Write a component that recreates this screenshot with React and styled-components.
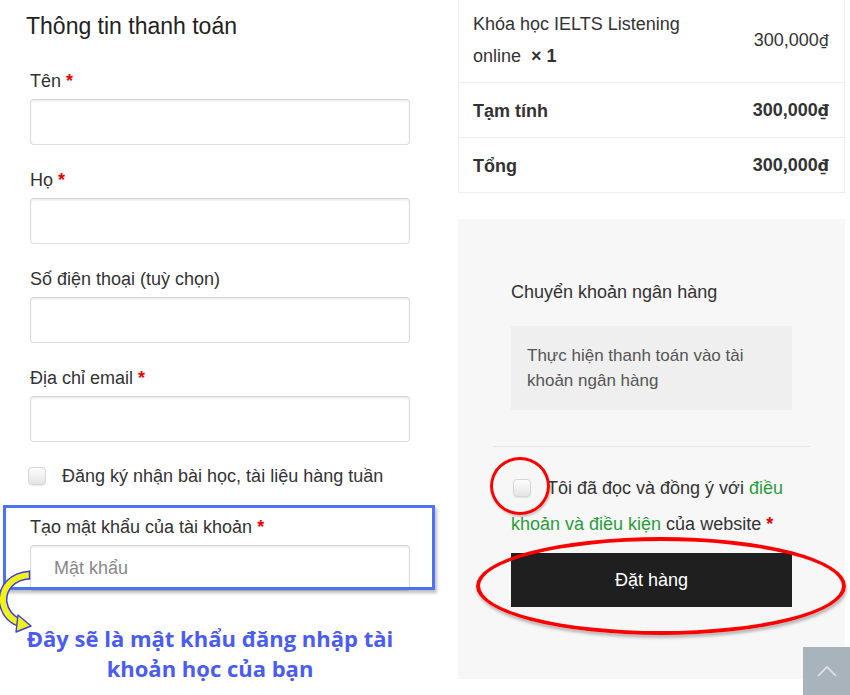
import React from "react";
import styled, { createGlobalStyle } from "styled-components";

const GlobalStyle = createGlobalStyle`
  html, body {
    margin: 0;
    padding: 0;
    background: #fff;
    font-family: "Liberation Sans", Arial, sans-serif;
    color: #333;
  }
  * { box-sizing: border-box; }
`;

const Page = styled.div`
  display: grid;
  grid-template-columns: 440px 387px;
  column-gap: 18px;
  width: 850px;
  height: 695px;
  overflow: hidden;
`;

const Billing = styled.div`
  padding: 0 30px 0 30px;
`;

const Title = styled.h3`
  margin: 13px 0 30px -4px;
  font-size: 23px;
  line-height: 26px;
  font-weight: normal;
  color: #222;
`;

const Field = styled.div`
  position: relative;
  margin-bottom: ${(p) => (p.$last ? "0" : "23px")};
`;

const Label = styled.label`
  display: block;
  font-size: 18px;
  line-height: 24px;
  margin-bottom: 6px;
  color: #333;
`;

const Req = styled.span`
  color: #e00;
  font-weight: bold;
`;

const Input = styled.input`
  display: block;
  width: 100%;
  height: 46px;
  border: 1px solid #ddd;
  border-top-color: #d2d2d2;
  border-radius: 4px;
  box-shadow: inset 0 2px 2px rgba(0, 0, 0, 0.06);
  padding: 0 23px;
  font-family: inherit;
  font-size: 18px;
  color: #333;
  background: #fff;
  outline: none;
  &::placeholder {
    color: #888;
  }
`;

const Box = styled.span`
  display: inline-block;
  flex: none;
  width: 18px;
  height: 18px;
  border: 1px solid #d6d6d6;
  border-radius: 4px;
  background: linear-gradient(#fdfdfd, #e4e4e4);
  box-shadow: 0 1px 1px rgba(0, 0, 0, 0.08);
`;

const CheckRow = styled.div`
  display: flex;
  align-items: center;
  gap: 16px;
  margin: 22px 0 27px -2px;
  font-size: 18px;
  line-height: 24px;
`;

const BlueFrame = styled.div`
  position: absolute;
  top: -10px;
  left: -27px;
  right: -25px;
  bottom: 1px;
  border: 3px solid #4d72f5;
  box-shadow: 2px 3px 3px rgba(0, 0, 0, 0.25);
  pointer-events: none;
`;

const Arrow = styled.svg`
  position: absolute;
  left: -30px;
  top: 45px;
  overflow: visible;
`;

const Note = styled.p`
  margin: 32px 0 0 -10px;
  width: 380px;
  text-align: center;
  font-family: "Open Sans", "Lato", sans-serif;
  font-weight: bold;
  font-size: 22px;
  line-height: 30px;
  color: #4a5cf2;
`;

const Side = styled.div`
  display: flex;
  flex-direction: column;
`;

const OrderTable = styled.div`
  border: 1px solid #eee;
  border-top: none;
  font-size: 18px;
`;

const OrderRow = styled.div`
  display: flex;
  justify-content: space-between;
  align-items: center;
  padding: ${(p) => (p.$item ? "8px 15px 10px 14px" : "11px 15px 10px 14px")};
  line-height: 32px;
  font-weight: ${(p) => (p.$bold ? "bold" : "normal")};
  border-top: ${(p) => (p.$item ? "none" : "1px solid #eee")};
  color: #333;
`;

const ItemName = styled.div`
  width: 240px;
`;

const Dong = styled.span`
  font-family: "DejaVu Sans", sans-serif;
  font-size: 16px;
`;

const Payment = styled.div`
  margin-top: 26px;
  background: #f7f7f7;
  padding: 35px 35px 72px;
`;

const Methods = styled.div`
  padding: 26px 18px 36px;
  border-bottom: 1px solid #e6e6e6;
`;

const MethodLabel = styled.div`
  font-size: 18px;
  line-height: 24px;
  color: #333;
  margin-bottom: 22px;
`;

const MethodDesc = styled.div`
  background: #efefef;
  padding: 17px 16px;
  font-size: 17px;
  line-height: 25px;
  color: #555;
`;

const Place = styled.div`
  padding: 23px 18px 0;
`;

const Terms = styled.div`
  position: relative;
  font-size: 18px;
  line-height: 36px;
  color: #333;
`;

const TermsBox = styled(Box)`
  vertical-align: -3px;
  margin: 0 16px 0 2px;
`;

const Link = styled.a`
  color: #2a9d3a;
  text-decoration: none;
`;

const RedCircle = styled.div`
  position: absolute;
  left: -21px;
  top: -13px;
  width: 60px;
  height: 58px;
  border: 3px solid #f00;
  border-radius: 50%;
  box-shadow: 1px 2px 2px rgba(0, 0, 0, 0.2);
  pointer-events: none;
`;

const ButtonWrap = styled.div`
  position: relative;
  margin-top: 11px;
`;

const OrderButton = styled.button`
  display: block;
  width: 100%;
  height: 54px;
  border: none;
  background: #1f1f1f;
  color: #fff;
  font-family: inherit;
  font-size: 18px;
`;

const RedEllipse = styled.div`
  position: absolute;
  left: -35px;
  top: -16px;
  width: 370px;
  height: 98px;
  border: 4px solid #f00;
  border-radius: 50%;
  box-shadow: 1px 3px 3px rgba(0, 0, 0, 0.25);
  pointer-events: none;
`;

const ToTop = styled.div`
  position: fixed;
  right: 0;
  bottom: 0;
  width: 47px;
  height: 48px;
  background: #a9b3bb;
  display: flex;
  align-items: center;
  justify-content: center;
`;

function Chevron() {
  return (
    <svg width="20" height="12" viewBox="0 0 20 12">
      <path d="M1 11 L10 2 L19 11" fill="none" stroke="#dfe3e6" strokeWidth="1.6" />
    </svg>
  );
}

function CurvedArrow() {
  const band = "M30 15 C 12 16, 2 28, 3 42 C 5 54, 12 60, 20 63";
  return (
    <Arrow width="40" height="70" viewBox="0 0 40 70">
      <path d={band} fill="none" stroke="#3a3ee0" strokeWidth="9" />
      <path d={band} fill="none" stroke="#f2f21a" strokeWidth="6" />
      <path
        d="M18 55 L31 66 L16 72 Z"
        fill="#f2f21a"
        stroke="#3a3ee0"
        strokeWidth="1.4"
        strokeLinejoin="round"
      />
      <path d="M29.5 10.5 L29.5 19.5" stroke="#3a3ee0" strokeWidth="1.4" />
    </Arrow>
  );
}

function Price() {
  return (
    <span>
      300,000<Dong>₫</Dong>
    </span>
  );
}

export default function App() {
  return (
    <>
      <GlobalStyle />
      <Page>
        <Billing>
          <Title>Thông tin thanh toán</Title>
          <Field>
            <Label>
              Tên <Req>*</Req>
            </Label>
            <Input type="text" />
          </Field>
          <Field>
            <Label>
              Họ <Req>*</Req>
            </Label>
            <Input type="text" />
          </Field>
          <Field>
            <Label>Số điện thoại (tuỳ chọn)</Label>
            <Input type="tel" />
          </Field>
          <Field $last>
            <Label>
              Địa chỉ email <Req>*</Req>
            </Label>
            <Input type="email" />
          </Field>
          <CheckRow>
            <Box />
            Đăng ký nhận bài học, tài liệu hàng tuần
          </CheckRow>
          <Field $last>
            <Label>
              Tạo mật khẩu của tài khoản <Req>*</Req>
            </Label>
            <Input type="password" placeholder="Mật khẩu" />
            <BlueFrame />
            <CurvedArrow />
          </Field>
          <Note>Đây sẽ là mật khẩu đăng nhập tài khoản học của bạn</Note>
        </Billing>

        <Side>
          <OrderTable>
            <OrderRow $item>
              <ItemName>
                Khóa học IELTS Listening online&nbsp; <b>×&nbsp;1</b>
              </ItemName>
              <Price />
            </OrderRow>
            <OrderRow $bold>
              <span>Tạm tính</span>
              <Price />
            </OrderRow>
            <OrderRow $bold>
              <span>Tổng</span>
              <Price />
            </OrderRow>
          </OrderTable>

          <Payment>
            <Methods>
              <MethodLabel>Chuyển khoản ngân hàng</MethodLabel>
              <MethodDesc>Thực hiện thanh toán vào tài khoản ngân hàng</MethodDesc>
            </Methods>
            <Place>
              <Terms>
                <TermsBox />
                Tôi đã đọc và đồng ý với <Link>điều khoản và điều kiện</Link> của website{" "}
                <Req>*</Req>
                <RedCircle />
              </Terms>
              <ButtonWrap>
                <OrderButton>Đặt hàng</OrderButton>
                <RedEllipse />
              </ButtonWrap>
            </Place>
          </Payment>
        </Side>
      </Page>
      <ToTop>
        <Chevron />
      </ToTop>
    </>
  );
}
